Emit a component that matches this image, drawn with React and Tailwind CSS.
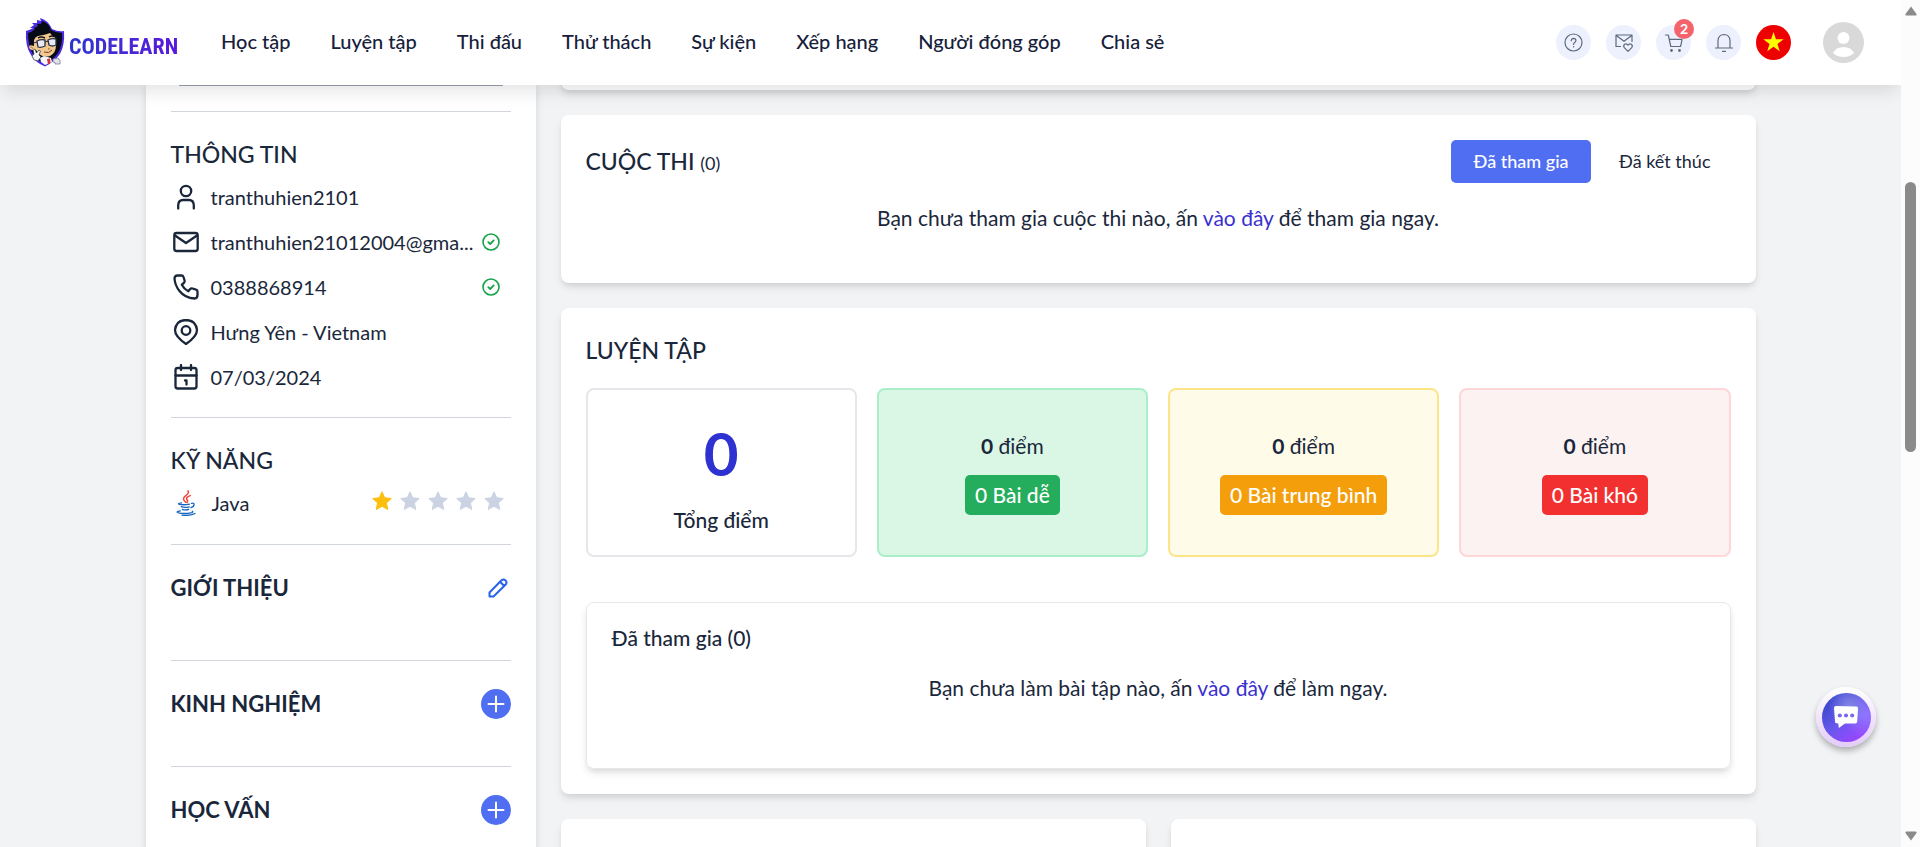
import React from 'react';

const CARD_SHADOW = 'shadow-[0_5px_8px_-1px_rgba(0,0,0,0.1),0_3px_5px_-1px_rgba(0,0,0,0.06)]';
const CARD = 'rounded-lg bg-white ' + CARD_SHADOW;

const NAV = ['Học tập', 'Luyện tập', 'Thi đấu', 'Thử thách', 'Sự kiện', 'Xếp hạng', 'Người đóng góp', 'Chia sẻ'];

function Mascot() {
  return (
    <svg viewBox="0 0 40 49" className="h-[49px] w-10" aria-hidden="true">
      <path d="M1 13 Q5 12 8 10 L5 10 L9 7 L7 5 L12 5 L12 2 L16 3 L15 0 Q23 2 27 11 Q33 14 39 13 Q40 27 35 36 Q29 44 20 48.500 Q11 45 6 37 Q0 28 1 13Z" fill="#4a2be0" />
      <path d="M3 15 Q7 14 10 11 L9 10 L13 8 L12 6 L16 6 L17 3 Q24 5 26 12 Q31 15 37 15 Q38 27 33 35 Q28 42 20 46 Q12 42 8 36 Q3 28 3 15Z" fill="#070b16" />
      <path d="M9 22 Q10 19 13 18 Q20 17 25 15 Q28 19 30 19 L31 27 Q31 35 25 38 Q18 40 13 35 L11 32 Q5 33 4 29 Q4 26 9 28Z" fill="#f3c88e" />
      <path d="M5 29 Q7 28 8 31" fill="none" stroke="#9c6c3c" strokeWidth=".8" />
      <path d="M12 23 q4 -2 8 -1 l0 6 q-4 2 -7 1z M23 22 q4 -2 8 -1 l0 6 q-4 2 -7 0z" fill="#e8ebf4" stroke="#2b3142" strokeWidth="1.300" />
      <path d="M20 24 L23 23 M8 25 L12 24" stroke="#2b3142" strokeWidth="1.200" />
      <path d="M13 20 Q16 18 20 20 M24 19 Q27 17 30 19" fill="none" stroke="#10131f" strokeWidth="1.400" />
      <path d="M19 34 Q24 36 27 32" fill="none" stroke="#7d3a24" strokeWidth="1" />
      <path d="M23 30 l1.500 .8 -1.500 .6" fill="none" stroke="#a06a3a" strokeWidth=".8" />
      <path d="M15 40 L19 38 L26 40 L27 44 L20 47 L16 44Z" fill="#f5f6fa" />
      <path d="M22 41 L25 40.500 L25.500 45 L23 46.500Z" fill="#d92f2f" />
      <path d="M7 38 L9 36 L8 32 L10 31 L11.500 35 L14 32 L15.500 33 L14 37 L16 39 L13 43 L9 42Z" fill="#f4f5f9" stroke="#30364a" strokeWidth=".7" />
      <path d="M28 41 L33 40 Q36 42 35 46 L30 46 Q31 44 28 44Z" fill="#dfe2ea" stroke="#6b7183" strokeWidth=".7" />
    </svg>
  );
}

function RoundButton({ label, children }) {
  return (
    <button type="button" aria-label={label} className="relative flex size-[35px] items-center justify-center rounded-full bg-[#edf0fd] text-[#5c6b7d]">
      {children}
    </button>
  );
}

function Line({ size = 'size-5', width = 1.2, children, box = '0 0 20 20' }) {
  return (
    <svg viewBox={box} className={size} fill="none" stroke="currentColor" strokeWidth={width} strokeLinecap="round" strokeLinejoin="round" aria-hidden="true">
      {children}
    </svg>
  );
}

function Header() {
  return (
    <header className="relative z-10 flex h-[85px] shrink-0 items-center bg-white pr-[37px] pl-[25px] shadow-[0_10px_16px_-3px_rgba(0,0,0,0.1)]">
      <a href="#home" className="mr-[41px] flex items-center gap-1">
        <Mascot />
        <span className="mt-2 w-[111px] bg-gradient-to-r from-[#2d33cf] to-[#5a17dd] bg-clip-text font-['Roboto_Condensed','Liberation_Sans_Narrow','Liberation_Sans',sans-serif] text-[22px] leading-6 font-bold text-transparent">CODELEARN</span>
      </a>
      <nav className="flex gap-10 pb-[3px] text-xl font-medium whitespace-nowrap text-[#16203a]">
        {NAV.map((n) => <a key={n} href="#nav">{n}</a>)}
      </nav>
      <div className="ml-auto flex items-center gap-[15px]">
        <RoundButton label="Trợ giúp">
          <Line>
            <circle cx="9.500" cy="9.500" r="8.500" />
            <path d="M7.200 7.700 q.2 -2.400 2.400 -2.400 q2.300 .1 2.300 2.200 q0 1.300 -1.300 2 q-1 .6 -1 1.900 M9.600 13.600 v.3" />
          </Line>
        </RoundButton>
        <RoundButton label="Lời mời">
          <Line>
            <path d="M6.500 13.500 H2 V2 H18 V8.500 M2.300 2.500 L10 8.300 L17.700 2.500" />
            <path d="M14 18.300 L10.300 14.600 Q8.900 12.600 10.600 11.200 Q12.600 10.200 14 12.200 Q15.400 10.200 17.400 11.200 Q19.100 12.600 17.700 14.600Z" />
          </Line>
        </RoundButton>
        <RoundButton label="Giỏ hàng">
          <Line>
            <path d="M1.500 2 H4.300 L6.800 13.500 H16.500 Q17.500 10 18 6.300 H5.200" />
            <circle cx="7.500" cy="17.500" r=".8" fill="currentColor" />
            <circle cx="15.500" cy="17.500" r=".8" fill="currentColor" />
          </Line>
          <span className="absolute -top-1.5 -right-[3px] flex size-5 items-center justify-center rounded-full bg-[#f4636c] text-sm font-bold text-white">2</span>
        </RoundButton>
        <RoundButton label="Thông báo">
          <Line>
            <path d="M1.500 15 H18.500 M4 15 V7.500 Q4.500 1.600 10 1.500 Q15.500 1.600 16 7.500 V15 M8.500 18.300 H11.500" />
          </Line>
        </RoundButton>
        <button type="button" aria-label="Tiếng Việt">
          <svg viewBox="0 0 35 35" className="size-[35px]" aria-hidden="true">
            <circle cx="17.500" cy="17.500" r="17.500" fill="#ee0000" />
            <path d="M17.500 7 l2.450 7.300 7.700 .05 -6.200 4.600 2.300 7.400 -6.250 -4.500 -6.250 4.500 2.300 -7.400 -6.200 -4.600 7.700 -.05z" fill="#ff0" />
          </svg>
        </button>
        <button type="button" aria-label="Tài khoản" className="ml-[17px]">
          <svg viewBox="0 0 41 41" className="size-[41px]" aria-hidden="true">
            <circle cx="20.500" cy="20.500" r="20.500" fill="#d9d9d9" />
            <circle cx="20.500" cy="16" r="6" fill="#fff" />
            <path d="M10 31 Q13 25 20.500 25 Q28 25 31 31 Q27 35 20.500 35 Q14 35 10 31Z" fill="#fff" />
          </svg>
        </button>
      </div>
    </header>
  );
}

const INFO = [
  { text: 'tranthuhien2101', icon: <><circle cx="13" cy="7" r="5.200" /><path d="M5.200 24.500 V21 Q5.500 16 10 16 H16 Q20.500 16 20.800 21 V24.500" /></> },
  { text: 'tranthuhien21012004@gma...', ok: true, icon: <><rect x="1.300" y="4" width="23.400" height="18" rx="2.200" /><path d="M2 6.500 L13 14 L24 6.500" /></> },
  { text: '0388868914', ok: true, icon: <path d="M1.500 4.500 Q1.500 1.500 4.500 1.500 H8.500 Q10 1.500 10.500 3 L11.600 6.500 Q12 8 10.800 9 L8.800 10.700 Q11 15 15.300 17.200 L17 15.200 Q18 14 19.500 14.500 L23 15.600 Q24.500 16 24.500 17.500 V21 Q24.500 24.500 21.500 24.500 Q12 24 6.500 17 Q2 11.500 1.500 4.500Z" /> },
  { text: 'Hưng Yên - Vietnam', icon: <><path d="M13 25 Q2 17.500 2 11 Q3 1.200 13 1 Q23 1.200 24 11 Q24 17.500 13 25Z" /><circle cx="13" cy="11.500" r="4.300" /></> },
  { text: '07/03/2024', icon: <><rect x="2.500" y="4" width="21" height="20.500" rx="2.200" /><path d="M2.500 11.500 H23.500 M8 1 V6 M18 1 V6 M12 16.500 H13.500 V20.500" /></> },
];

function Section({ title, bold, action, children, spacing }) {
  return (
    <section className={'border-t border-gray-300 pt-[25px] ' + spacing}>
      <div className="mb-0.5 flex h-[35px] items-center justify-between">
        <h2 className={bold ? 'text-[22px] font-bold' : 'text-[23px] font-medium'}>{title}</h2>
        {action}
      </div>
      {children}
    </section>
  );
}

function AddButton({ label }) {
  return (
    <button type="button" aria-label={label} className="flex size-[30px] items-center justify-center rounded-full bg-[#506ef1] text-white">
      <Line size="size-[18px]" width={2} box="0 0 18 18"><path d="M9 1.500 V16.500 M1.500 9 H16.500" /></Line>
    </button>
  );
}

function Star({ on }) {
  return (
    <svg viewBox="0 0 20 20" className={'size-5 ' + (on ? 'text-[#fcbf0d]' : 'text-[#cbd3e3]')} aria-hidden="true">
      <path fill="currentColor" stroke="currentColor" strokeLinejoin="round" d="M10 .8 l2.700 6 6.600 .7 -4.900 4.400 1.400 6.700 -5.800 -3.400 -5.800 3.400 1.400 -6.700 -4.900 -4.400 6.600 -.7z" />
    </svg>
  );
}

function JavaLogo() {
  return (
    <svg viewBox="0 0 20 26" className="h-[26px] w-5" fill="none" strokeLinecap="round" aria-hidden="true">
      <path d="M12 .8 Q13.500 3.500 9.500 5.800 Q5.500 8.500 9.600 12.300 M14.300 5.600 Q9.800 7.300 10.800 9.300 Q12.300 11 11 12.500" stroke="#f44336" strokeWidth="1.500" />
      <path d="M5.500 12.800 Q1 13.600 3.500 14.400 Q8 15.200 13.500 14.100 M5.300 16.600 Q8.500 18 13.300 16.800 M6.300 19.300 Q9 20.400 12.600 19.500 M15.500 13.300 Q18.500 12.800 18 15 Q17.500 17 15 17.700 M4.300 20.800 Q-1 21.800 2.500 22.900 Q9 24.200 16 22.600 Q17.500 22 16.300 21.200 M6 25.200 Q15 26 19 23.500" stroke="#1565c0" strokeWidth="1.300" />
    </svg>
  );
}

function Sidebar() {
  return (
    <aside className="w-[390px] shrink-0 bg-white px-[25px] text-[#1a273b] shadow-[0_0_8px_rgba(0,0,0,0.12)]">
      <div className="mx-2 mb-[25px] h-px rounded-full bg-gray-400" />
      <Section title="THÔNG TIN" spacing="pb-[18px]">
        <ul>
          {INFO.map((r) => (
            <li key={r.text} className="flex h-[45px] items-center text-xl">
              <span className="ml-0.5 shrink-0"><Line size="size-[26px]" width={2.3} box="0 0 26 26">{r.icon}</Line></span>
              <span className="ml-3 w-[268px] whitespace-nowrap">{r.text}</span>
              {r.ok && (
                <span className="ml-[3px] text-[#16a34a]">
                  <Line size="size-[18px]" width={1.6} box="0 0 18 18"><circle cx="9" cy="9" r="8" /><path d="M6.300 9.200 L8.200 11 L11.700 7.400" strokeWidth="1.800" /></Line>
                </span>
              )}
            </li>
          ))}
        </ul>
      </Section>
      <Section title="KỸ NĂNG" spacing="pb-[19px]">
        <div className="flex h-[45px] items-center text-xl">
          <span className="ml-[5px]"><JavaLogo /></span>
          <span className="ml-4">Java</span>
          <span className="mr-[7px] ml-auto flex gap-2 pb-[3px]" role="img" aria-label="1/5">
            {[1, 0, 0, 0, 0].map((on, i) => <Star key={i} on={on} />)}
          </span>
        </div>
      </Section>
      <Section title="GIỚI THIỆU" bold spacing="pb-[53px]" action={
        <button type="button" aria-label="Chỉnh sửa giới thiệu" className="mr-[3px] text-[#2563eb]">
          <Line width={2}><path d="M1.500 18.500 V14.500 L13.500 2.300 Q15.500 .6 17.600 2.400 Q19.400 4.500 17.700 6.500 L5.500 18.500Z M12.300 4 L16 7.700" /></Line>
        </button>
      } />
      <Section title="KINH NGHIỆM" bold spacing="pb-[43px]" action={<AddButton label="Thêm kinh nghiệm" />} />
      <Section title="HỌC VẤN" bold spacing="pb-[43px]" action={<AddButton label="Thêm học vấn" />} />
    </aside>
  );
}

function Message({ before, after }) {
  return (
    <p className="text-center text-[21px] leading-10">
      {before} <a href="#join" className="text-[#3a30d0]">vào đây</a> {after}
    </p>
  );
}

const LEVELS = [
  { label: '0 Bài dễ', box: 'border-[#a9efc8] bg-[#daf7e6]', badge: 'bg-[#23ad5c]' },
  { label: '0 Bài trung bình', box: 'border-[#fce588] bg-[#fffbe9]', badge: 'bg-[#f59e0b]' },
  { label: '0 Bài khó', box: 'border-[#fdd6d7] bg-[#fdf2f2]', badge: 'bg-[#f33030]' },
];

function Content() {
  return (
    <main className="flex min-w-0 flex-1 flex-col gap-[25px] text-[#1a273b]">
      <div className={'-mt-5 h-[25px] shrink-0 ' + CARD} />
      <section className={'p-[25px] ' + CARD}>
        <div className="mb-[15px] flex items-center justify-between">
          <h2 className="text-[23px] font-medium">CUỘC THI <span className="text-lg font-normal">(0)</span></h2>
          <div className="flex gap-2 text-lg leading-[27px]">
            <button type="button" className="min-w-[140px] rounded-[5px] bg-[#506ef1] px-5 py-2 font-medium text-white">Đã tham gia</button>
            <button type="button" className="rounded-[5px] px-5 py-2">Đã kết thúc</button>
          </div>
        </div>
        <div className="pb-5">
          <Message before="Bạn chưa tham gia cuộc thi nào, ấn" after="để tham gia ngay." />
        </div>
      </section>
      <section className={'p-[25px] ' + CARD}>
        <h2 className="mb-5 text-[23px] leading-[35px] font-medium">LUYỆN TẬP</h2>
        <div className="grid grid-cols-4 gap-5">
          <div className="flex h-[169px] flex-col items-center rounded-lg border-2 border-gray-200 pt-[33px]">
            <strong className="text-[60px] leading-[60px] font-bold text-[#2d32d0]">0</strong>
            <span className="mt-[22px] text-[21px] leading-[30px] font-medium">Tổng điểm</span>
          </div>
          {LEVELS.map((l) => (
            <div key={l.label} className={'flex h-[169px] flex-col items-center justify-center gap-3.5 rounded-lg border-2 text-[21px] leading-[30px] ' + l.box}>
              <span><strong>0</strong> điểm</span>
              <span className={'rounded-[5px] px-2.5 py-[5px] font-medium text-white ' + l.badge}>{l.label}</span>
            </div>
          ))}
        </div>
        <div className={'mt-[45px] rounded-lg border border-gray-200 px-[25px] pt-5 pb-[60px] ' + CARD_SHADOW}>
          <h3 className="mb-[15px] text-[21px] leading-[30px] font-medium">Đã tham gia (0)</h3>
          <Message before="Bạn chưa làm bài tập nào, ấn" after="để làm ngay." />
        </div>
      </section>
      <div className="grid grid-cols-2 gap-[25px]">
        <div className={'h-60 ' + CARD} />
        <div className={'h-60 ' + CARD} />
      </div>
    </main>
  );
}

function ScrollTrack() {
  return (
    <div className="flex w-[19px] shrink-0 flex-col items-center bg-[#fcfcfc] py-1.5" aria-hidden="true">
      <svg viewBox="0 0 12 10" className="h-2.5 w-3"><path d="M6 .5 L11.500 8 Q12 9.500 10.800 9.500 H1.200 Q0 9.500 .5 8Z" fill="#8a8a8a" /></svg>
      <div className="grow-[166]" />
      <div className="w-[11px] grow-[270] rounded-full bg-[#8a8a8a]" />
      <div className="grow-[379]" />
      <svg viewBox="0 0 12 10" className="h-2.5 w-3"><path d="M6 9.500 L11.500 2 Q12 .5 10.800 .5 H1.200 Q0 .5 .5 2Z" fill="#8a8a8a" /></svg>
    </div>
  );
}

function ChatButton() {
  return (
    <button type="button" aria-label="Trò chuyện" className="fixed right-11 bottom-[100px] z-20 flex size-[60px] items-center justify-center rounded-full bg-gradient-to-b from-white to-[#e3cbf8] shadow-[0_4px_6px_rgba(0,0,0,0.28)]">
      <span className="flex size-[49px] items-center justify-center rounded-full bg-[radial-gradient(circle_at_55%_25%,#8184e6_0%,transparent_45%),radial-gradient(circle_at_90%_45%,#9076ff_0%,transparent_45%),linear-gradient(140deg,#3c48cc_15%,#6a58ee_50%,#9a45ff_85%)]">
        <svg viewBox="0 0 24 22" className="h-[22px] w-6" aria-hidden="true">
          <path d="M2 0 L22.500 .6 Q24 .8 24 2.200 L23.200 15.500 Q23 17.500 21.300 17.500 L11 17.500 L4.800 22 L4.300 17.500 L2.300 17.300 Q1 17 1 15.500 L0 2 Q0 0 2 0Z" fill="#fff" />
          <g fill="#7a6bea"><circle cx="5.800" cy="9.500" r="2.100" /><circle cx="12" cy="9.500" r="2.100" /><circle cx="18.200" cy="9.500" r="2.100" /></g>
        </svg>
      </span>
    </button>
  );
}

export default function App() {
  return (
    <div className="flex h-screen overflow-hidden bg-[#f2f3f5] font-['Lato','Open_Sans',sans-serif]">
      <div className="flex min-w-0 flex-1 flex-col overflow-hidden">
        <Header />
        <div className="mx-auto flex w-full max-w-[1610px] flex-1 gap-[25px]">
          <Sidebar />
          <Content />
        </div>
      </div>
      <ScrollTrack />
      <ChatButton />
    </div>
  );
}
